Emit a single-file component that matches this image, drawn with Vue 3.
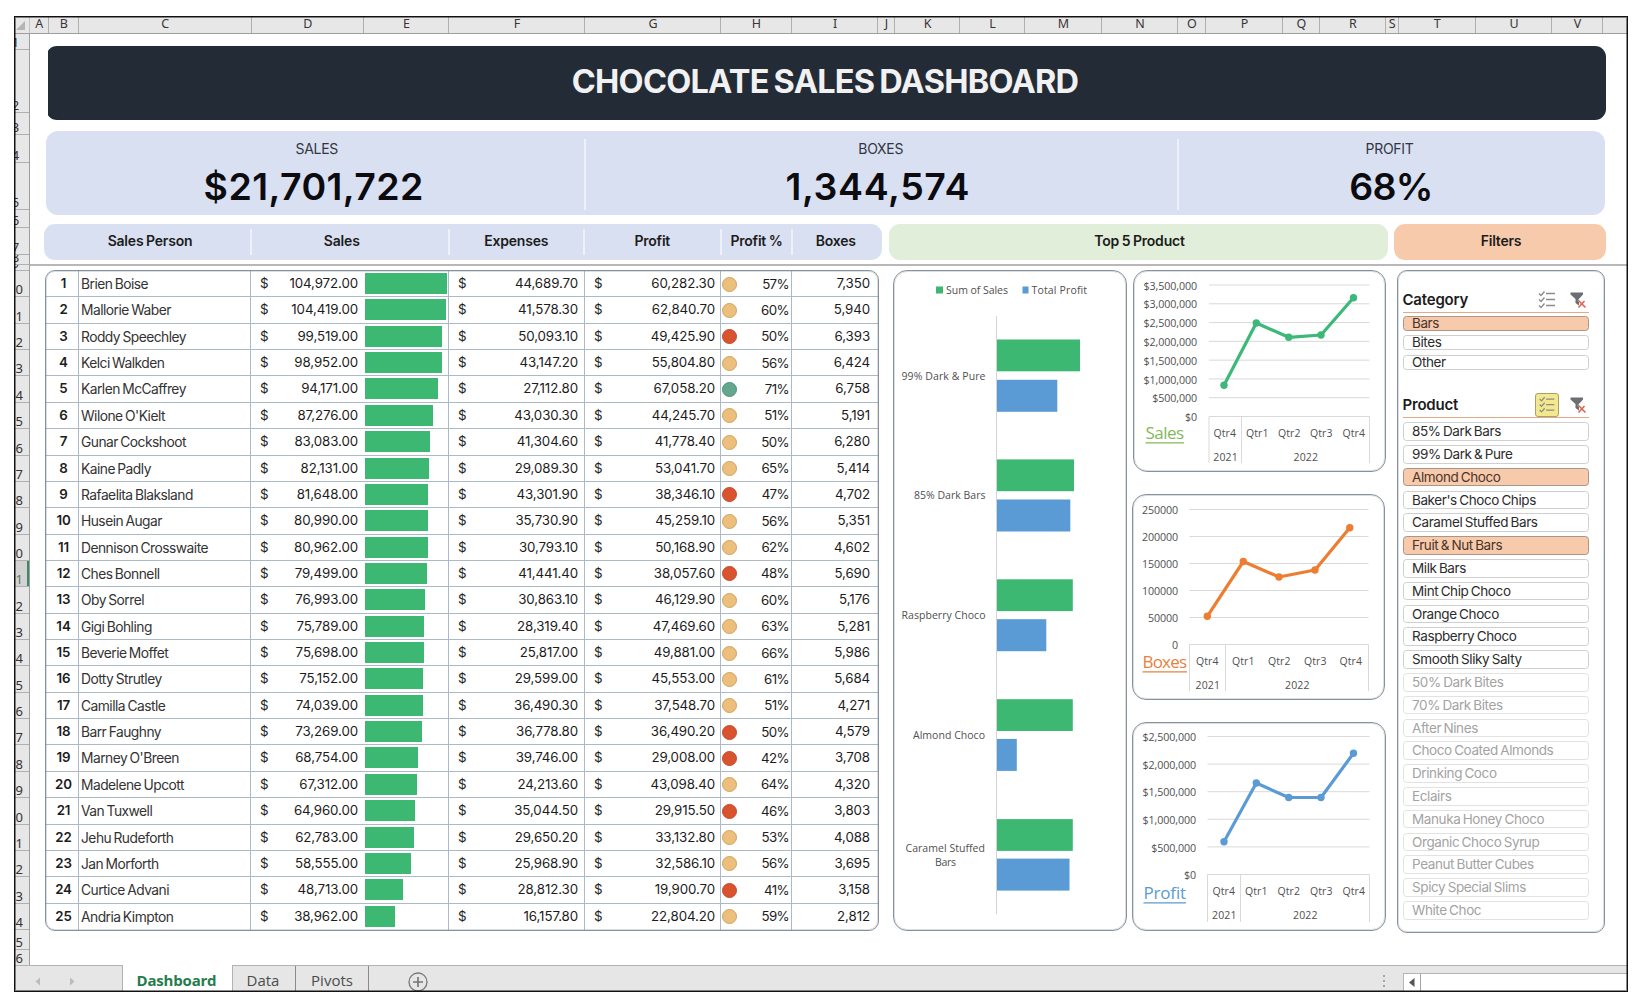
<template>
  <div class="window">
    <div class="cols">
      <div class="cols__corner">
        <svg width="15" height="16" viewBox="0 0 15 16"><path d="M10 4v9H1z" fill="#b5b5b5" /></svg>
      </div>
      <div v-for="col in columns" :key="col.name" class="cols__cell" :style="{ width: col.width + 'px' }">{{ col.name }}</div>
    </div>

    <div class="workspace">
      <div class="rows">
        <div
          v-for="row in sheetRows"
          :key="row.n"
          :class="['rows__cell', { 'rows__cell--active': row.n === 21 }]"
          :style="{ height: row.h + 'px' }"
        >
          <span>{{ row.n }}</span>
        </div>
      </div>

      <div class="sheet">
        <h1 class="title"><span>CHOCOLATE SALES DASHBOARD</span></h1>

        <div class="kpis">
          <div v-for="kpi in kpis" :key="kpi.label" :class="['kpi', kpi.cls]">
            <div class="kpi__label">{{ kpi.label }}</div>
            <div class="kpi__value">{{ kpi.value }}</div>
          </div>
        </div>

        <div class="heads">
          <div class="heads__table">
            <div v-for="head in tableHeads" :key="head"><span>{{ head }}</span></div>
          </div>
          <div class="heads__products">Top 5 Product</div>
          <div class="heads__filters">Filters</div>
        </div>

        <div class="freeze"></div>

        <div class="panels">
          <div class="table card">
            <div v-for="(p, i) in people" :key="p[0]" class="table__row">
              <div class="table__index">{{ i + 1 }}</div>
              <div class="table__name">{{ p[0] }}</div>
              <div class="table__money table__money--sales"><span>$</span><span>{{ money(p[1]) }}</span></div>
              <div class="table__bar"><i :style="{ width: barWidth(p[1]) + 'px' }"></i></div>
              <div class="table__money table__money--expenses"><span>$</span><span>{{ money(p[2]) }}</span></div>
              <div class="table__money table__money--profit"><span>$</span><span>{{ money(p[3]) }}</span></div>
              <div class="table__percent"><i :class="dotClass(p)"></i><span>{{ p[4] }}%</span></div>
              <div class="table__boxes">{{ p[5].toLocaleString('en-US') }}</div>
            </div>
          </div>

          <div class="products card">
            <svg width="232" height="658" viewBox="894 271 232 658">
              <rect x="936" y="286.5" width="7" height="7" fill="#3cb873" />
              <text x="946" y="293.8" textLength="62" class="tick">Sum of Sales</text>
              <rect x="1022.5" y="286.5" width="6" height="7" fill="#5b9bd5" />
              <text x="1031.5" y="293.8" textLength="55.5" class="tick">Total Profit</text>
              <line x1="996.5" x2="996.5" y1="316" y2="914" stroke="#d4d4d4" />
              <g v-for="(bar, i) in topProducts" :key="bar.name">
                <rect x="997" :y="339.5 + i * 119.9" :width="bar.sales" height="31.8" fill="#3cb873" />
                <rect x="997" :y="379.8 + i * 119.7" :width="bar.profit" height="32" fill="#5b9bd5" />
                <text
                  v-for="line in bar.lines"
                  :key="line.text"
                  :x="line.x"
                  :y="line.y"
                  :textLength="line.w"
                  class="tick"
                >{{ line.text }}</text>
              </g>
            </svg>
          </div>

          <div class="trends">
            <div v-for="chart in charts" :key="chart.title" :class="['card', 'trend', chart.cls]">
              <svg :width="chart.box[2]" :height="chart.box[3]" :viewBox="chart.box.join(' ')">
                <g v-for="(label, i) in chart.labels" :key="label">
                  <line :x1="chart.x[0]" :x2="chart.x[2]" :y1="gridY(chart, i)" :y2="gridY(chart, i)" stroke="#d9d9d9" />
                  <text :x="chart.labelRight" :y="gridY(chart, i) + 4.6" text-anchor="end" class="tick tick--axis">{{ label }}</text>
                </g>
                <line v-for="x in chart.x" :key="x" :x1="x" :x2="x" :y1="chart.bottom" :y2="chart.end" stroke="#d9d9d9" />
                <polyline :points="chart.points.join(' ')" fill="none" :stroke="chart.color" stroke-width="3.2" stroke-linejoin="round" />
                <circle v-for="pt in chart.points" :key="pt" :cx="pt[0]" :cy="pt[1]" r="3.7" :fill="chart.color" />
                <text
                  v-for="(pt, i) in chart.points"
                  :key="'q' + i"
                  :x="chart.quarters[i]"
                  :y="chart.bottom + 20.3"
                  textLength="22.5"
                  class="tick"
                >{{ quarters[i] }}</text>
                <text :x="(chart.x[0] + chart.x[1]) / 2 - 12" :y="chart.bottom + 44.4" textLength="24.5" class="tick">2021</text>
                <text :x="(chart.x[1] + chart.x[2]) / 2 - 12" :y="chart.bottom + 44.4" textLength="24.5" class="tick">2022</text>
                <text :x="chart.link[0]" :y="chart.link[1]" :textLength="chart.link[2]" :fill="chart.linkColor" class="link">{{ chart.title }}</text>
                <line
                  :x1="chart.link[0]"
                  :x2="chart.link[0] + chart.link[2]"
                  :y1="chart.link[1] + 3.5"
                  :y2="chart.link[1] + 3.5"
                  :stroke="chart.linkColor"
                  stroke-width="1.3"
                />
              </svg>
            </div>
          </div>

          <div class="filters card">
            <section v-for="slicer in slicers" :key="slicer.title" :class="['slicer', slicer.cls]">
              <header>
                <h2>{{ slicer.title }}</h2>
                <svg :class="['slicer__multi', { 'slicer__multi--on': slicer.multi }]" width="24" height="24" viewBox="0 0 24 24" fill="none">
                  <path d="M11 5.5h9M11 11.5h9M11 17.5h9" stroke="#8c8c8c" stroke-width="1.4" />
                  <path d="M4 5.5l2 2 3.500-4M4 11.5l2 2 3.500-4M4 17.5l2 2 3.500-4" stroke="#8c8c8c" stroke-width="1.4" />
                </svg>
                <svg width="17" height="18" viewBox="0 0 17 18" fill="none">
                  <path d="M0.500 1.500h12.500v2L9 8v6.500L5.500 12V8L0.500 3.500z" fill="#6b6e73" />
                  <path d="M8.500 8.500l7 7.500M15 9.500l-6 7" stroke="#fff" stroke-width="2.6" />
                  <path d="M8 9l7.500 7.500M14.500 10l-6 6.500" stroke="#dc6450" stroke-width="1.6" />
                </svg>
              </header>
              <ul>
                <li v-for="item in slicer.items" :key="item" :class="itemClass(item, slicer)">{{ item }}</li>
              </ul>
            </section>
          </div>
        </div>
      </div>
    </div>

    <div class="tabs">
      <div class="tabs__nav">
        <svg width="50" height="12" viewBox="0 0 50 12" fill="#bcbcbc"><path d="M9 1.5v8L4.500 5.500zM39 1.500v8l4.500-4z" /></svg>
      </div>
      <div class="tabs__tab tabs__tab--active">Dashboard</div>
      <div class="tabs__tab tabs__tab--data">Data</div>
      <div class="tabs__tab tabs__tab--pivots">Pivots</div>
      <svg class="tabs__add" width="22" height="22" viewBox="0 0 22 22" fill="none" stroke="#777">
        <circle cx="11" cy="11" r="9" stroke-width="1.3" />
        <path d="M11 6v10M6 11h10" stroke-width="1.7" />
      </svg>
      <div class="tabs__dots"><i></i><i></i><i></i></div>
      <div class="tabs__scroll">
        <div><svg width="6" height="9" viewBox="0 0 6 9"><path d="M5.500 0v9L0 4.500z" fill="#555" /></svg></div>
      </div>
    </div>
  </div>
</template>

<script setup>
const colEdges = [30, 48.5, 79, 251.5, 364, 449, 585, 721, 792, 878, 895, 960, 1025, 1102, 1178, 1206, 1283, 1320, 1386, 1398.5, 1476, 1552, 1603]
const columns = 'ABCDEFGHIJKLMNOPQRSTUV'.split('').map((name, i) => ({
  name,
  width: colEdges[i + 1] - colEdges[i]
}))

// bottom edge of the first rows, the data rows all share one height
const rowEdges = [34, 50, 113, 135, 163, 210, 228, 255, 265, 271]
const sheetRows = []
for (let n = 1; n <= 36; n++) {
  let h = 26.36
  if (n < 10) h = rowEdges[n] - rowEdges[n - 1]
  if (n === 35) h = 20.5
  if (n === 36) h = 15.5
  sheetRows.push({ n, h })
}

const kpis = [
  { label: 'SALES', value: '$21,701,722', cls: 'kpi--sales' },
  { label: 'BOXES', value: '1,344,574', cls: 'kpi--boxes' },
  { label: 'PROFIT', value: '68%', cls: 'kpi--profit' }
]

const tableHeads = ['Sales Person', 'Sales', 'Expenses', 'Profit', 'Profit %', 'Boxes']

// name, sales, expenses, profit, profit %, boxes
const people = [
  ['Brien Boise', 104972, 44689.7, 60282.3, 57, 7350],
  ['Mallorie Waber', 104419, 41578.3, 62840.7, 60, 5940],
  ['Roddy Speechley', 99519, 50093.1, 49425.9, 50, 6393],
  ['Kelci Walkden', 98952, 43147.2, 55804.8, 56, 6424],
  ['Karlen McCaffrey', 94171, 27112.8, 67058.2, 71, 6758],
  ["Wilone O'Kielt", 87276, 43030.3, 44245.7, 51, 5191],
  ['Gunar Cockshoot', 83083, 41304.6, 41778.4, 50, 6280],
  ['Kaine Padly', 82131, 29089.3, 53041.7, 65, 5414],
  ['Rafaelita Blaksland', 81648, 43301.9, 38346.1, 47, 4702],
  ['Husein Augar', 80990, 35730.9, 45259.1, 56, 5351],
  ['Dennison Crosswaite', 80962, 30793.1, 50168.9, 62, 4602],
  ['Ches Bonnell', 79499, 41441.4, 38057.6, 48, 5690],
  ['Oby Sorrel', 76993, 30863.1, 46129.9, 60, 5176],
  ['Gigi Bohling', 75789, 28319.4, 47469.6, 63, 5281],
  ['Beverie Moffet', 75698, 25817, 49881, 66, 5986],
  ['Dotty Strutley', 75152, 29599, 45553, 61, 5684],
  ['Camilla Castle', 74039, 36490.3, 37548.7, 51, 4271],
  ['Barr Faughny', 73269, 36778.8, 36490.2, 50, 4579],
  ["Marney O'Breen", 68754, 39746, 29008, 42, 3708],
  ['Madelene Upcott', 67312, 24213.6, 43098.4, 64, 4320],
  ['Van Tuxwell', 64960, 35044.5, 29915.5, 46, 3803],
  ['Jehu Rudeforth', 62783, 29650.2, 33132.8, 53, 4088],
  ['Jan Morforth', 58555, 25968.9, 32586.1, 56, 3695],
  ['Curtice Advani', 48713, 28812.3, 19900.7, 41, 3158],
  ['Andria Kimpton', 38962, 16157.8, 22804.2, 59, 2812]
]

const money = (value) => value.toLocaleString('en-US', { minimumFractionDigits: 2 })
const barWidth = (value) => ((value / 104972) * 81.5).toFixed(1)
const dotClass = (p) => {
  const ratio = p[3] / p[1]
  if (ratio >= 0.67) return 'dot dot--green'
  return ratio < 0.5 ? 'dot dot--red' : 'dot'
}

const topProducts = [
  { name: 'dark99', sales: 83, profit: 60.3, lines: [{ text: '99% Dark & Pure', x: 901.5, y: 380, w: 84 }] },
  { name: 'dark85', sales: 77, profit: 73.3, lines: [{ text: '85% Dark Bars', x: 914, y: 499, w: 71.5 }] },
  { name: 'raspberry', sales: 75.8, profit: 49.3, lines: [{ text: 'Raspberry Choco', x: 901.5, y: 619, w: 84 }] },
  { name: 'almond', sales: 75.8, profit: 19.8, lines: [{ text: 'Almond Choco', x: 913, y: 739, w: 72 }] },
  {
    name: 'caramel',
    sales: 75.8,
    profit: 72.5,
    lines: [
      { text: 'Caramel Stuffed', x: 905.5, y: 851.5, w: 79.5 },
      { text: 'Bars', x: 935, y: 866, w: 21 }
    ]
  }
]

const quarters = ['Qtr4', 'Qtr1', 'Qtr2', 'Qtr3', 'Qtr4']
const charts = [
  {
    title: 'Sales',
    cls: 'trend--sales',
    box: [1134, 271, 251, 200],
    labels: ['$3,500,000', '$3,000,000', '$2,500,000', '$2,000,000', '$1,500,000', '$1,000,000', '$500,000', '$0'],
    labelRight: 1197,
    x: [1209, 1241.5, 1369.5],
    top: 285,
    bottom: 416.5,
    end: 463,
    points: [[1224, 385.3], [1256.3, 323], [1288.7, 337.3], [1321, 335], [1353.5, 297.7]],
    quarters: [1213.5, 1246, 1278, 1310, 1342.5],
    color: '#3cb878',
    linkColor: '#84b85a',
    link: [1145.5, 439.3, 38.5]
  },
  {
    title: 'Boxes',
    cls: 'trend--boxes',
    box: [1133, 495, 251, 203],
    labels: ['250000', '200000', '150000', '100000', '50000', '0'],
    labelRight: 1178,
    x: [1189.5, 1225.5, 1368.5],
    top: 509.5,
    bottom: 644.5,
    end: 691,
    points: [[1207.3, 616.3], [1243.3, 561.5], [1279, 577], [1315, 570], [1349.8, 527.8]],
    quarters: [1196, 1232, 1268, 1304, 1339.5],
    color: '#ed7d31',
    linkColor: '#e8803c',
    link: [1142.5, 668.3, 44.5]
  },
  {
    title: 'Profit',
    cls: 'trend--profit',
    box: [1133, 723, 252, 206],
    labels: ['$2,500,000', '$2,000,000', '$1,500,000', '$1,000,000', '$500,000', '$0'],
    labelRight: 1196,
    x: [1207.5, 1240.5, 1369.5],
    top: 736.5,
    bottom: 874.5,
    end: 922,
    points: [[1224, 841.7], [1256.3, 783], [1288.7, 797.5], [1321, 797.5], [1353.5, 753.3]],
    quarters: [1212.5, 1245, 1277.5, 1310, 1342.5],
    color: '#5b9bd5',
    linkColor: '#5a9bd0',
    link: [1143.5, 899.3, 42.5]
  }
]
const gridY = (chart, i) => chart.top + ((chart.bottom - chart.top) * i) / (chart.labels.length - 1)

const slicers = [
  { title: 'Category', cls: 'slicer--category', multi: false, items: ['Bars', 'Bites', 'Other'], selected: ['Bars'], empty: [] },
  {
    title: 'Product',
    cls: 'slicer--product',
    multi: true,
    items: [
      '85% Dark Bars', '99% Dark & Pure', 'Almond Choco', "Baker's Choco Chips", 'Caramel Stuffed Bars',
      'Fruit & Nut Bars', 'Milk Bars', 'Mint Chip Choco', 'Orange Choco', 'Raspberry Choco', 'Smooth Sliky Salty',
      '50% Dark Bites', '70% Dark Bites', 'After Nines', 'Choco Coated Almonds', 'Drinking Coco', 'Eclairs',
      'Manuka Honey Choco', 'Organic Choco Syrup', 'Peanut Butter Cubes', 'Spicy Special Slims', 'White Choc'
    ],
    selected: ['Almond Choco', 'Fruit & Nut Bars'],
    empty: [
      '50% Dark Bites', '70% Dark Bites', 'After Nines', 'Choco Coated Almonds', 'Drinking Coco', 'Eclairs',
      'Manuka Honey Choco', 'Organic Choco Syrup', 'Peanut Butter Cubes', 'Spicy Special Slims', 'White Choc'
    ]
  }
]
const itemClass = (item, slicer) => ({
  selected: slicer.selected.includes(item),
  empty: slicer.empty.includes(item)
})
</script>

<style>
body {
  background: #fff;
}
#app {
  display: flow-root;
}
</style>

<style scoped>
.window,
.window * {
  box-sizing: border-box;
}

.window {
  display: flex;
  flex-direction: column;
  width: 1614px;
  height: 976px;
  margin: 16px 0 0 14px;
  border: 1px solid #111;
  outline: 1px solid rgba(0, 0, 0, 0.45);
  outline-offset: -2px;
  overflow: hidden;
  font-family: Inter, sans-serif;
  color: #1c1c1c;
}

/* column and row headings */
.cols {
  display: flex;
  flex: none;
  height: 17px;
  background: #e7e7e7;
  border-bottom: 1px solid #9e9e9e;
}

.cols__corner {
  width: 15px;
  border-right: 1px solid #c4c4c4;
}

.cols__cell {
  flex: none;
  padding-left: 1px;
  border-right: 1px solid #b0b0b0;
  font: 12.5px/13px 'Noto Sans', sans-serif;
  color: #3a3338;
  text-align: center;
}

.workspace {
  display: flex;
  flex: none;
  height: 931px;
  overflow: hidden;
}

.rows {
  flex: none;
  width: 15px;
  background: #e7e7e7;
  border-right: 1px solid #9e9e9e;
}

.rows__cell {
  display: flex;
  align-items: flex-end;
  justify-content: flex-end;
  border-bottom: 1px solid #b0b0b0;
  overflow: hidden;
}

.rows__cell span {
  flex: none;
  width: 27px;
  font: 13px/14px 'Noto Sans', sans-serif;
  color: #333;
  text-align: center;
}

.rows__cell--active {
  background: #d3d3d3;
  box-shadow: inset -2px 0 #3f8a5f;
}

.rows__cell--active span {
  color: #5c7a68;
}

.sheet {
  flex: 1;
  padding-top: 12px;
}

.title {
  display: flex;
  align-items: center;
  justify-content: center;
  width: 1560px;
  height: 74px;
  margin: 0 0 0 16px;
  padding: 0 2px 3px 0;
  background: #232b36;
  border-radius: 11px;
  clip-path: inset(0 0 0 2px);
  font-size: 32.5px;
  font-weight: 700;
  letter-spacing: -0.75px;
  word-spacing: -2px;
  color: #f1f1f1;
}

.kpis {
  display: grid;
  grid-template-columns: 537.5px 593.5px 1fr;
  width: 1559px;
  height: 84px;
  margin: 11px 0 0 16px;
  padding: 8px 0 7px;
  background: #d9e0f2;
  border-radius: 12px;
}

.kpi {
  text-align: center;
  color: #0c0c10;
}

.kpi + .kpi {
  border-left: 2px solid #edf1fa;
}

.kpi__label {
  font-size: 14px;
  line-height: 19px;
  letter-spacing: -0.3px;
  color: #33363f;
}

.kpi__value {
  margin-top: 6px;
  font-size: 37.5px;
  line-height: 46px;
  font-weight: 600;
  letter-spacing: 0.4px;
}

.kpi--sales .kpi__label {
  padding-left: 4px;
}

.kpi--sales .kpi__value {
  padding-right: 2px;
}

.kpi--boxes .kpi__label {
  padding-right: 1px;
}

.kpi--boxes .kpi__value {
  padding-right: 7px;
  letter-spacing: 0.6px;
}

.kpi--profit .kpi__label {
  padding-right: 5px;
}

.kpi--profit .kpi__value {
  padding-right: 2px;
  letter-spacing: -0.7px;
}

.heads {
  display: flex;
  height: 36px;
  margin: 9px 0 0 14px;
  font-size: 14px;
  font-weight: 600;
  letter-spacing: -0.2px;
  word-spacing: -0.7px;
}

.heads > div {
  border-radius: 11px;
}

.heads__table {
  display: grid;
  grid-template-columns: 206px 197.5px 135.5px 136.5px 71px 1fr;
  width: 838px;
  padding: 5px 0;
  background: #d9e0f2;
}

.heads__table div {
  text-align: center;
  line-height: 24px;
}

.heads__table div:first-child {
  padding-left: 6px;
}

.heads__table div + div {
  border-left: 2px solid #edf1fa;
}

.heads__table div:nth-child(2) {
  padding-right: 16px;
}

.heads__table div:nth-child(5) {
  padding-left: 1px;
}

.heads__table div:last-child {
  padding-right: 3px;
}

.heads__products,
.heads__filters {
  line-height: 34px;
  text-align: center;
}

.heads__products {
  width: 499px;
  margin-left: 7px;
  padding-left: 2px;
  background: #e1eed9;
}

.heads__filters {
  width: 212px;
  margin-left: 6px;
  padding-left: 2px;
  background: #f7caac;
}

.freeze {
  height: 2px;
  margin-top: 4px;
  background: #b9b7b9;
}

.panels {
  display: flex;
  margin: 4px 0 0 15px;
}

.card {
  flex: none;
  background: #fff;
  border: 1.5px solid #87929e;
  border-radius: 14px;
  outline: 1px solid rgba(135, 146, 158, 0.3);
  outline-offset: -2px;
}

.card > svg {
  display: block;
}

/* sales people */
.table {
  display: grid;
  grid-template-rows: repeat(25, 1fr);
  width: 834px;
  height: 661px;
  border-radius: 10px;
  overflow: hidden;
  font-size: 13.3px;
  letter-spacing: -0.1px;
}

.table__row {
  display: grid;
  grid-template-columns: 33px 172px 113px 85px 136px 136px 71px 1fr;
  min-height: 0;
  border-bottom: 1px solid #acb9c7;
  line-height: 25px;
}

.table__row:last-child {
  border-bottom: 0;
}

.table__row > div {
  border-right: 1px solid #acb9c7;
}

.table__row > div:last-child,
.table__row > .table__money--sales {
  border-right: 0;
}

.table__index {
  padding-left: 3px;
  font-weight: 600;
  text-align: center;
}

.table__name {
  padding: 1px 0 0 2px;
  font-size: 13.8px;
  letter-spacing: -0.52px;
  word-spacing: -1px;
  color: #333;
}

.table__money {
  display: flex;
  justify-content: space-between;
  padding: 0 6px 0 9px;
}

.table__money--expenses {
  padding: 0 6px 0 9px;
}

.table__money--profit {
  padding-right: 5px;
}

.table__bar i {
  display: block;
  height: 21px;
  margin: 2px 0 0 1px;
  background: #3cb873;
}

.table__percent {
  display: flex;
  align-items: center;
  justify-content: space-between;
  padding: 0 2px 0 1px;
  letter-spacing: -0.6px;
}

.dot {
  width: 15px;
  height: 15px;
  border: 1.5px solid #cfa45c;
  border-radius: 50%;
  background: #ecc07c;
}

.dot--red {
  border-color: #c4492c;
  background: #d9532f;
}

.dot--green {
  border-color: #4c9179;
  background: #63a88e;
}

.table__boxes {
  padding-right: 8px;
  text-align: right;
}

/* charts */
.products {
  width: 234px;
  height: 661px;
  margin-left: 13.5px;
}

.trends {
  display: flex;
  flex-direction: column;
  width: 254px;
  margin-left: 5.5px;
}

.trend--sales {
  width: 253px;
  height: 202px;
  margin-left: 1px;
}

.trend--boxes {
  width: 253px;
  height: 206px;
  margin-top: 22px;
}

.trend--profit {
  height: 209px;
  margin-top: 22px;
}

.tick {
  font: 10.5px 'Open Sans', sans-serif;
  fill: #505050;
}

.tick--axis {
  font-size: 10.7px;
  letter-spacing: -0.1px;
}

.link {
  font: 17px 'Open Sans', sans-serif;
}

/* slicers */
.filters {
  width: 208px;
  height: 663px;
  margin-left: 10.5px;
  padding: 17px 15px 0 5px;
  border-radius: 10px;
}

.slicer header {
  display: flex;
  align-items: center;
  height: 25px;
  padding-right: 2px;
  border-bottom: 1.5px solid #e2ab86;
}

.slicer h2 {
  flex: 1;
  margin: 0;
  font-size: 15px;
  line-height: 22px;
  font-weight: 600;
  letter-spacing: -0.2px;
}

.slicer__multi {
  margin-right: 11px;
}

.slicer__multi--on {
  background: #f3e88e;
  border: 1px solid #a89f6a;
  border-radius: 3px;
}

.slicer ul {
  display: grid;
  gap: 4.3px;
  margin: 3px 0 0;
  padding: 0;
  list-style: none;
}

.slicer li {
  height: 18.5px;
  padding-left: 8.5px;
  border: 1px solid #cfcfcf;
  border-radius: 3.5px;
  font-size: 13.5px;
  line-height: 17px;
  letter-spacing: -0.4px;
  word-spacing: -1px;
  color: #2c2c2c;
}

.slicer li.selected {
  background: #f7caac;
  border-color: #a8968a;
  color: #4a342a;
}

.slicer li.empty {
  border-color: #e2e2e2;
  color: #a3a3a3;
}

.slicer--category li {
  height: 15px;
  line-height: 13px;
}

.slicer--category ul {
  gap: 4.3px;
}

.slicer--product {
  margin-top: 23px;
}

.slicer--product ul {
  margin-top: 4.7px;
}

/* sheet tabs */
.tabs {
  display: flex;
  flex: 1;
  background: #e6e6e6;
  border-top: 1px solid #b3b3b3;
  font: 15px/29px 'Open Sans', sans-serif;
  color: #4c4c4c;
}

.tabs__nav {
  width: 108px;
  padding: 2px 0 0 16px;
  border-right: 1px solid #b3b3b3;
}

.tabs__tab {
  text-align: center;
}

.tabs__tab--active {
  width: 110px;
  margin-top: -1px;
  padding-right: 2px;
  border-right: 1px solid #b3b3b3;
  background: #fff;
  font-weight: 700;
  line-height: 31px;
  letter-spacing: -0.2px;
  color: #257c4b;
}

.tabs__tab--data {
  width: 63px;
  padding-right: 2px;
  border-right: 1px solid #8a8a8a;
}

.tabs__tab--pivots {
  width: 73px;
  border-right: 1px solid #8a8a8a;
}

.tabs__add {
  flex: none;
  margin: 5px 0 0 38px;
}

.tabs__dots {
  display: flex;
  flex-direction: column;
  gap: 3px;
  margin: 9px 18px 0 auto;
}

.tabs__dots i {
  width: 2px;
  height: 2px;
  background: #a5a5a5;
}

.tabs__scroll {
  width: 224px;
  margin-top: 7px;
  border: 1px solid #b5b5b5;
  border-width: 1px 0 0 1px;
  background: #fff;
}

.tabs__scroll div {
  display: flex;
  align-items: center;
  justify-content: center;
  width: 17px;
  height: 17px;
  border-right: 1px solid #a5a5a5;
}
</style>
